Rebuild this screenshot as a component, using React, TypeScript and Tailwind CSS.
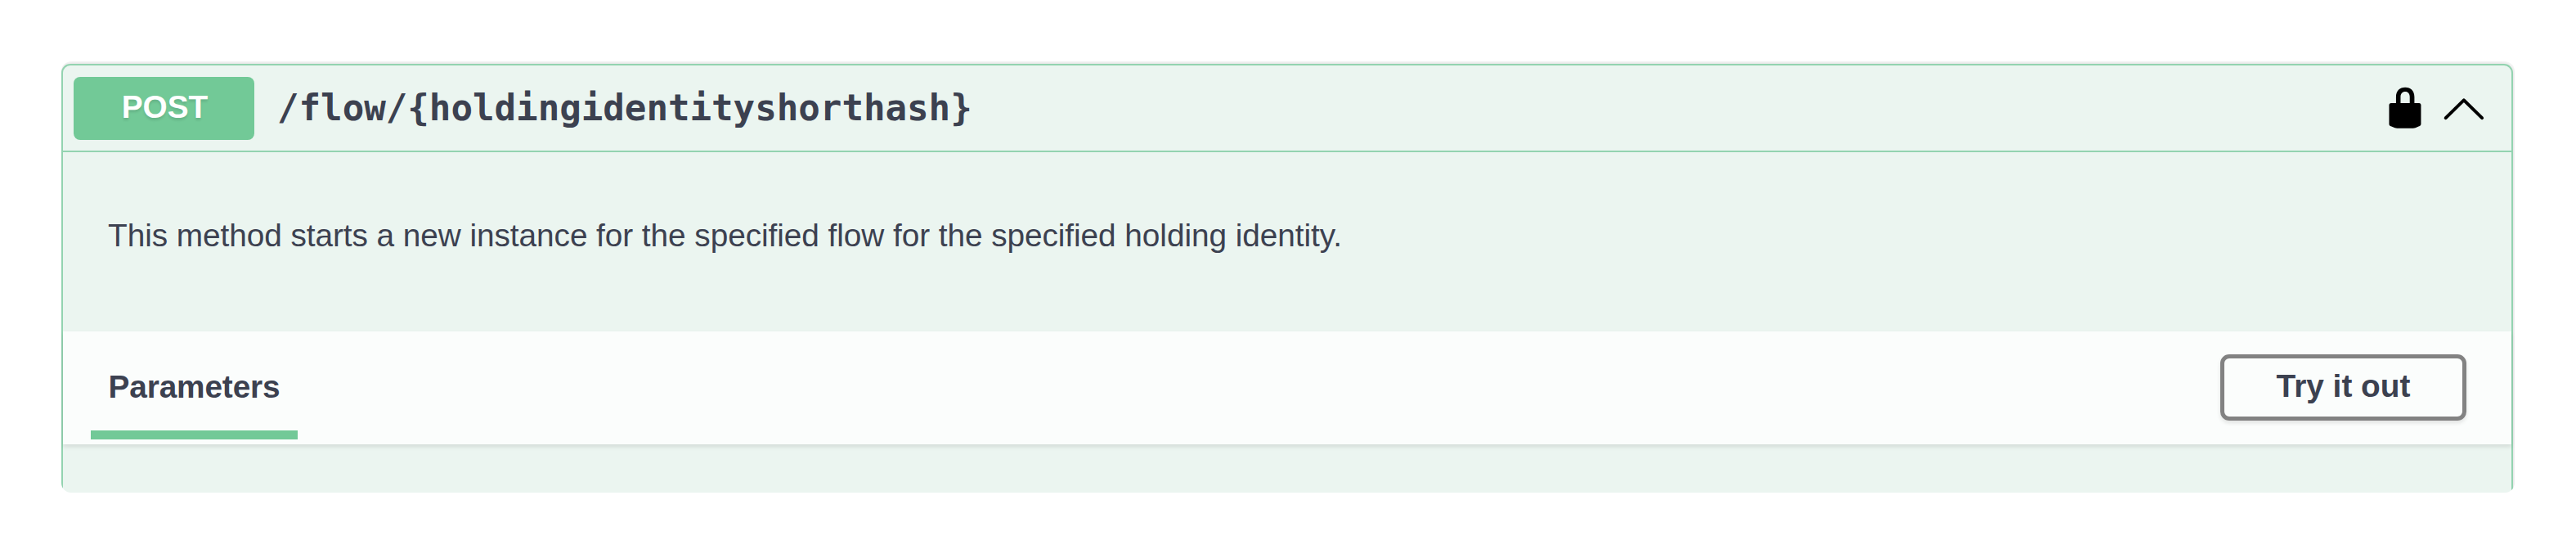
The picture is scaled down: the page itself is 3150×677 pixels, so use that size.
function LockIcon() {
  return (
    <svg viewBox="0 0 20 20" className="size-[55.5px] shrink-0 fill-black">
      <path
        fillRule="evenodd"
        d="M16.3 7.9H14.2V5.2C14.2 2.5 12.6 1 10.15 1S6.1 2.5 6.1 5.2V7.9H3.9c-.5 0-.85.35-.85.85V17.2c0 .4.3.75.8.95l1.3.5C5.7 18.9 6.4 19 7.1 19h6c.7 0 1.4-.1 1.95-.35l1.2-.5c.5-.2.85-.55.85-.95V8.75c0-.5-.3-.85-.8-.85zM12.15 7.9H8.1V5.2C8.1 3.7 8.9 2.85 10.15 2.85s2 .85 2 2.35z"
      />
    </svg>
  );
}

function ArrowIcon() {
  return (
    <svg viewBox="0 0 20 20" className="size-[55.5px] shrink-0">
      <path
        d="M2.05 14.45 10.05 6.6l8 7.85"
        fill="none"
        stroke="black"
        strokeWidth="1.45"
        strokeLinecap="round"
        strokeLinejoin="round"
      />
    </svg>
  );
}

function Summary() {
  return (
    <div className="flex h-[106px] items-center border-b-2 border-[#93d3b0] pr-[30.5px] pl-[13px]">
      <span className="flex h-[77px] w-[221px] items-center justify-center rounded-[8px] bg-[#72c997] pb-px pl-[2px] text-[38.8px] font-bold text-white [text-shadow:0_3px_3px_rgba(0,0,0,0.1)]">
        POST
      </span>
      <span className="ml-[28px] font-['DejaVu_Sans_Mono',monospace] text-[44.2px] leading-[56px] font-bold tracking-[-0.05px] whitespace-nowrap">
        /flow/&#123;holdingidentityshorthash&#125;
      </span>
      <div className="ml-auto flex gap-[16.5px]">
        <LockIcon />
        <ArrowIcon />
      </div>
    </div>
  );
}

function ParametersHeader() {
  return (
    <div className="flex h-[138px] items-center justify-between bg-[#fbfdfc] pr-[55px] pl-[34px] shadow-[0_3px_5px_rgba(0,0,0,0.1)]">
      <div className="flex h-full w-[253px] flex-col pb-[6px]">
        <h4 className="flex flex-1 items-center justify-center pt-[15px] text-[38.8px] leading-[44px] font-bold tracking-[-0.15px]">
          Parameters
        </h4>
        <div className="h-[11px] bg-[#72c997]" />
      </div>
      <button className="mb-px flex h-[81px] w-[301px] items-center justify-center rounded-[11px] border-[5px] border-[#828282] pb-[3px] text-[38.8px] font-bold shadow-[0_3px_5px_rgba(0,0,0,0.1)]">
        Try it out
      </button>
    </div>
  );
}

export default function App() {
  return (
    <main className="h-[677px] w-[3150px] bg-white px-[75px] pt-[75px] font-['Liberation_Sans',Arial,sans-serif] text-[#3c4150]">
      <div className="h-[526.5px] overflow-hidden rounded-[12px] pt-[3px] pr-[2px]">
        <section className="h-[560px] rounded-[11px] border-2 border-[#93d3b0] bg-[#ebf5f0] shadow-[0_0_8px_rgba(0,0,0,0.19)]">
          <Summary />
          <p className="flex h-[219px] items-start pt-[80px] pl-[55px] text-[38.8px] leading-[44px] tracking-[-0.07px] whitespace-nowrap">
            This method starts a new instance for the specified flow for the specified holding identity.
          </p>
          <ParametersHeader />
        </section>
      </div>
    </main>
  );
}
